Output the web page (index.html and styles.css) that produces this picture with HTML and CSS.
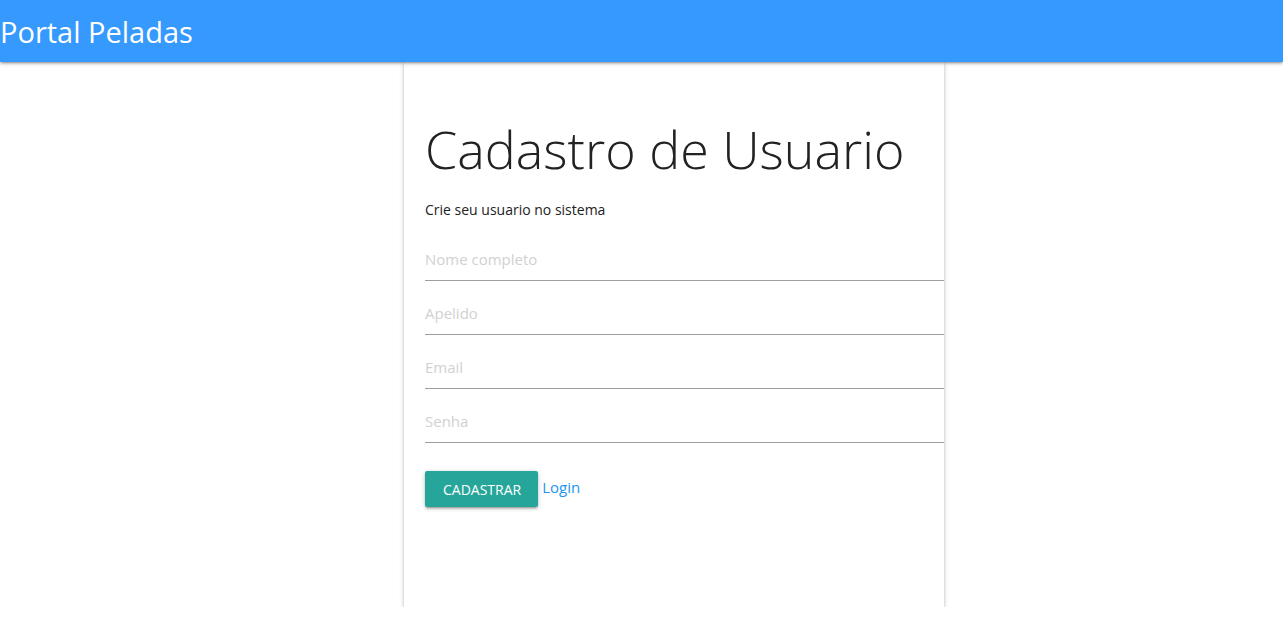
FILE: index.html
```html
<!DOCTYPE html>
<html lang="pt">
<head>
<meta charset="utf-8">
<title>Portal Peladas</title>
<link rel="stylesheet" href="styles.css">
</head>
<body>
<nav class="navbar">
  <span class="brand">Portal Peladas</span>
</nav>
<main class="page">
  <section class="card">
    <h1 class="title">Cadastro de Usuario</h1>
    <p class="subtitle">Crie seu usuario no sistema</p>
    <form class="form">
      <input class="field" type="text" placeholder="Nome completo">
      <input class="field" type="text" placeholder="Apelido">
      <input class="field" type="email" placeholder="Email">
      <input class="field" type="password" placeholder="Senha">
      <div class="actions">
        <button class="btn" type="button">Cadastrar</button>
        <a class="link" href="#">Login</a>
      </div>
    </form>
  </section>
</main>
</body>
</html>
```
FILE: styles.css
```css
* { box-sizing: border-box; }
html, body { margin: 0; padding: 0; }
body {
  font-family: "Open Sans", "Noto Sans", sans-serif;
  color: rgba(0,0,0,0.87);
  background: #fff;
}
.navbar {
  height: 62px;
  background: #3699fd;
  display: flex;
  align-items: center;
  box-shadow: 0 2px 2px 0 rgba(0,0,0,0.14), 0 3px 1px -2px rgba(0,0,0,0.12), 0 1px 5px 0 rgba(0,0,0,0.2);
  position: relative;
  z-index: 2;
}
.brand {
  color: #fff;
  font-size: 29px;
  line-height: 1;
}
.page {
  display: flex;
  padding-left: 404px;
}
.card {
  width: 540px;
  height: 545px;
  padding: 47px 0 0 21px;
  box-shadow: 0 2px 2px 0 rgba(0,0,0,0.14), 0 3px 1px -2px rgba(0,0,0,0.12), 0 1px 5px 0 rgba(0,0,0,0.2);
}
.title {
  margin: 0;
  font-weight: 300;
  font-size: 52px;
  line-height: 80px;
  color: #222;
}
.subtitle {
  margin: 11px 0 0;
  font-size: 14px;
  color: #222;
}
.form {
  display: flex;
  flex-direction: column;
  margin-top: 19px;
}
.field {
  width: 100%;
  height: 43px;
  margin-bottom: 11px;
  border: 0;
  border-bottom: 1px solid #9e9e9e;
  padding: 0;
  font-family: inherit;
  font-size: 15px;
  outline: none;
  background: transparent;
}
.field::placeholder { color: #d1d1d1; }
.actions {
  display: flex;
  align-items: center;
  gap: 4px;
  margin-top: 17px;
}
.btn {
  height: 36px;
  padding: 0 17px 0 18px;
  background: #26a69a;
  color: #fff;
  border: 0;
  border-radius: 2px;
  font-family: inherit;
  font-size: 14px;
  text-transform: uppercase;
  box-shadow: 0 2px 2px 0 rgba(0,0,0,0.14), 0 3px 1px -2px rgba(0,0,0,0.12), 0 1px 5px 0 rgba(0,0,0,0.2);
}
.link {
  color: #2196f3;
  text-decoration: none;
  font-size: 15px;
  margin-top: -4px;
}
```
